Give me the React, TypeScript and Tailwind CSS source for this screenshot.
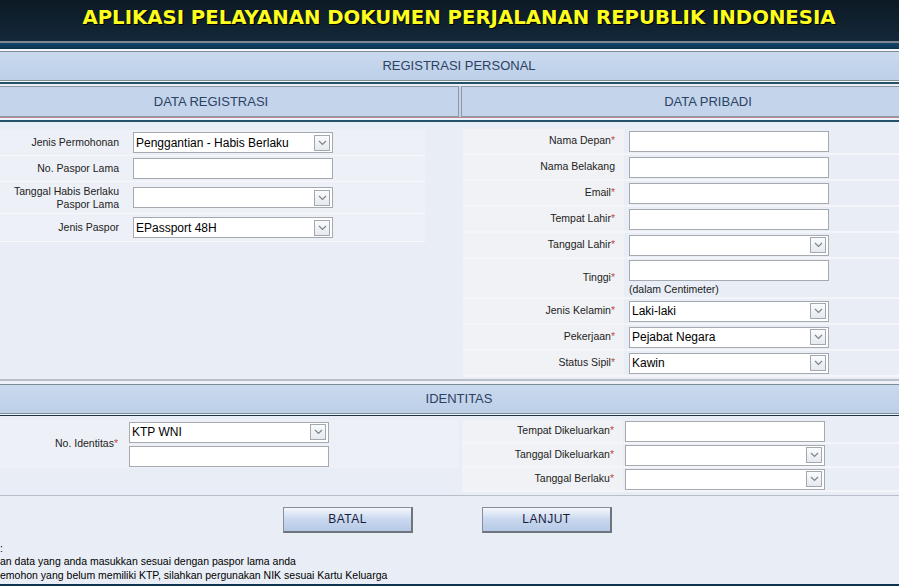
import React from 'react';

const Chevron = () => (
  <span className="flex h-[16px] w-[16px] items-center justify-center border border-[#a3a8b0] bg-gradient-to-b from-[#fafbfc] to-[#e6e9ee]">
    <svg width="9" height="6" viewBox="0 0 9 6">
      <path d="M1 1 L4.5 4.5 L8 1" fill="none" stroke="#7d848d" strokeWidth="1.2" />
    </svg>
  </span>
);

const Select = ({ value = '', w = 'w-[200px]' }: { value?: string; w?: string }) => (
  <div className={`flex h-[21px] ${w} items-center justify-between border border-[#a5a9b0] bg-white pl-[2px] pr-[2px]`}>
    <span className="text-[12px] text-black">{value}</span>
    <Chevron />
  </div>
);

const Input = ({ w = 'w-[200px]' }: { w?: string }) => (
  <div className={`h-[21px] ${w} border border-[#a5a9b0] bg-white`} />
);

const Star = () => <span className="text-[#c0504d]">*</span>;

// halaman digeser 37px ke kiri (seperti pada tangkapan layar)
const LeftRow = ({ label, children, h = 'h-[26px]' }: { label: React.ReactNode; children: React.ReactNode; h?: string }) => (
  <div className={`flex ${h} w-[462px] items-center border-b border-[#f6f8fb] bg-[#edf0f6]`}>
    <div className="w-[157px] pr-[1px] text-right text-[10.5px] leading-[13px] text-[#222]">{label}</div>
    <div className="ml-[13px]">{children}</div>
  </div>
);

const RightRow = ({ label, children, h = 'h-[26px]', gap = 'ml-[5px]' }: { label: React.ReactNode; children: React.ReactNode; h?: string; gap?: string }) => (
  <div className={`flex ${h} items-stretch border-b-2 border-[#f3f5f9]`}>
    <div className="flex w-[161px] items-center justify-end bg-[#f1f2f5] pr-[9px] text-[10.5px] text-[#222]">{label}</div>
    <div className={`flex flex-col justify-center ${gap}`}>{children}</div>
  </div>
);

const SectionBar = ({ title }: { title: string }) => (
  <div className="flex h-[30px] items-center justify-center border-y border-[#7e8a96] bg-gradient-to-b from-[#c9d9ee] to-[#bdd0e8] text-[13px] text-[#2c4263]">
    {title}
  </div>
);

const Button = ({ label }: { label: string }) => (
  <button className="h-[26px] w-[130px] border border-[#8a8f96] border-b-2 border-r-2 border-b-[#6f747b] border-r-[#6f747b] bg-gradient-to-b from-[#f4f7fc] via-[#c9d8ef] to-[#b6c9e6] text-[12px] tracking-[0.5px] text-[#1a1c3a]">
    {label}
  </button>
);

export default function App() {
  return (
    <div className="h-[586px] w-[899px] overflow-hidden bg-[#e9eef6] font-['Liberation_Sans',Arial,sans-serif]">
      <div className="-ml-[37px] w-[992px]">
        {/* judul */}
        <div className="flex h-[41px] items-center justify-center bg-gradient-to-b from-[#0c1a24] to-[#13283a] pb-[5px]">
          <h1 className="font-['DejaVu_Sans',Verdana,sans-serif] text-[19.7px] font-bold text-[#ffff1e] [text-shadow:1px_1px_0_#000]">
            APLIKASI PELAYANAN DOKUMEN PERJALANAN REPUBLIK INDONESIA
          </h1>
        </div>
        <div className="h-[2px] bg-[#7d8791]" />
        <div className="h-[6px] bg-gradient-to-b from-[#15466b] to-[#0b3350]" />
        <div className="h-[2px] bg-[#f4f7fb]" />

        <SectionBar title="REGISTRASI PERSONAL" />
        <div className="h-[1px] bg-[#f4f7fb]" />
        <div className="h-[2px] bg-[#24516a]" />
        <div className="h-[2px] bg-[#e9eef6]" />

        {/* header kolom */}
        <div className="flex h-[31px] gap-[2px] bg-[#c3d4eb]">
          <div className="flex w-[496px] items-center justify-center border border-[#8e96a0] text-[13px] text-[#2c4263]">
            DATA REGISTRASI
          </div>
          <div className="flex flex-1 items-center justify-center border border-[#8e96a0] text-[13px] text-[#2c4263]">
            DATA PRIBADI
          </div>
        </div>
        <div className="h-[1px] bg-[#b58a94]" />
        <div className="h-[2px] bg-[#eef2f8]" />
        <div className="h-[2px] bg-[#24516a]" />
        <div className="h-[3px] bg-[#e9eef6]" />

        {/* data */}
        <div className="flex h-[254px]">
          <div className="flex w-[500px] flex-col pt-[5px]">
            <LeftRow label="Jenis Permohonan">
              <Select value="Penggantian - Habis Berlaku" />
            </LeftRow>
            <LeftRow label="No. Paspor Lama">
              <Input />
            </LeftRow>
            <LeftRow label={<>Tanggal Habis Berlaku<br />Paspor Lama</>} h="h-[32px]">
              <Select />
            </LeftRow>
            <LeftRow label="Jenis Paspor" h="h-[28px]">
              <Select value="EPassport 48H" />
            </LeftRow>
          </div>
          <div className="flex flex-1 flex-col pt-[4px]">
            <RightRow label={<span>Nama Depan<Star /></span>}>
              <Input />
            </RightRow>
            <RightRow label="Nama Belakang">
              <Input />
            </RightRow>
            <RightRow label={<span>Email<Star /></span>}>
              <Input />
            </RightRow>
            <RightRow label={<span>Tempat Lahir<Star /></span>}>
              <Input />
            </RightRow>
            <RightRow label={<span>Tanggal Lahir<Star /></span>}>
              <Select />
            </RightRow>
            <RightRow label={<span>Tinggi<Star /></span>} h="h-[40px]">
              <Input />
              <span className="mt-[2px] text-[10.5px] leading-[13px] text-[#222]">(dalam Centimeter)</span>
            </RightRow>
            <RightRow label={<span>Jenis Kelamin<Star /></span>}>
              <Select value="Laki-laki" />
            </RightRow>
            <RightRow label={<span>Pekerjaan<Star /></span>}>
              <Select value="Pejabat Negara" />
            </RightRow>
            <RightRow label={<span>Status Sipil<Star /></span>}>
              <Select value="Kawin" />
            </RightRow>
          </div>
        </div>

        <div className="h-[2px] bg-[#b9c0ca]" />
        <div className="h-[3px] bg-[#eef2f8]" />
        <SectionBar title="IDENTITAS" />
        <div className="h-[1px] bg-[#f4f7fb]" />
        <div className="h-[1px] bg-[#1d3446]" />
        <div className="h-[2px] bg-[#e9eef6]" />

        {/* identitas */}
        <div className="flex h-[77px] pt-[2px]">
          <div className="flex h-[48px] w-[496px] items-center bg-[#edf0f6]">
            <div className="w-[157px] pr-[2px] text-right text-[10.5px] text-[#222]">
              No. Identitas<Star />
            </div>
            <div className="ml-[9px] flex flex-col gap-[3px]">
              <Select value="KTP WNI" />
              <Input />
            </div>
          </div>
          <div className="ml-[3px] flex flex-1 flex-col">
            <RightRow label={<span>Tempat Dikeluarkan<Star /></span>} h="h-[24px]" gap="ml-[2px]">
              <Input />
            </RightRow>
            <RightRow label={<span>Tanggal Dikeluarkan<Star /></span>} h="h-[24px]" gap="ml-[2px]">
              <Select />
            </RightRow>
            <RightRow label={<span>Tanggal Berlaku<Star /></span>} h="h-[24px]" gap="ml-[2px]">
              <Select />
            </RightRow>
          </div>
        </div>
        <div className="h-[1px] bg-[#b9c0ca]" />

        {/* tombol */}
        <div className="flex pt-[10px]">
          <div className="ml-[320px]">
            <Button label="BATAL" />
          </div>
          <div className="ml-[69px]">
            <Button label="LANJUT" />
          </div>
        </div>

        {/* catatan */}
        <div className="ml-[37px] mt-[9px] text-[10.5px] leading-[13.5px] text-black">
          <p>:</p>
          <p>an data yang anda masukkan sesuai dengan paspor lama anda</p>
          <p>emohon yang belum memiliki KTP, silahkan pergunakan NIK sesuai Kartu Keluarga</p>
        </div>
        <div className="mt-[2px] h-[10px] bg-[#0d3550]" />
      </div>
    </div>
  );
}
